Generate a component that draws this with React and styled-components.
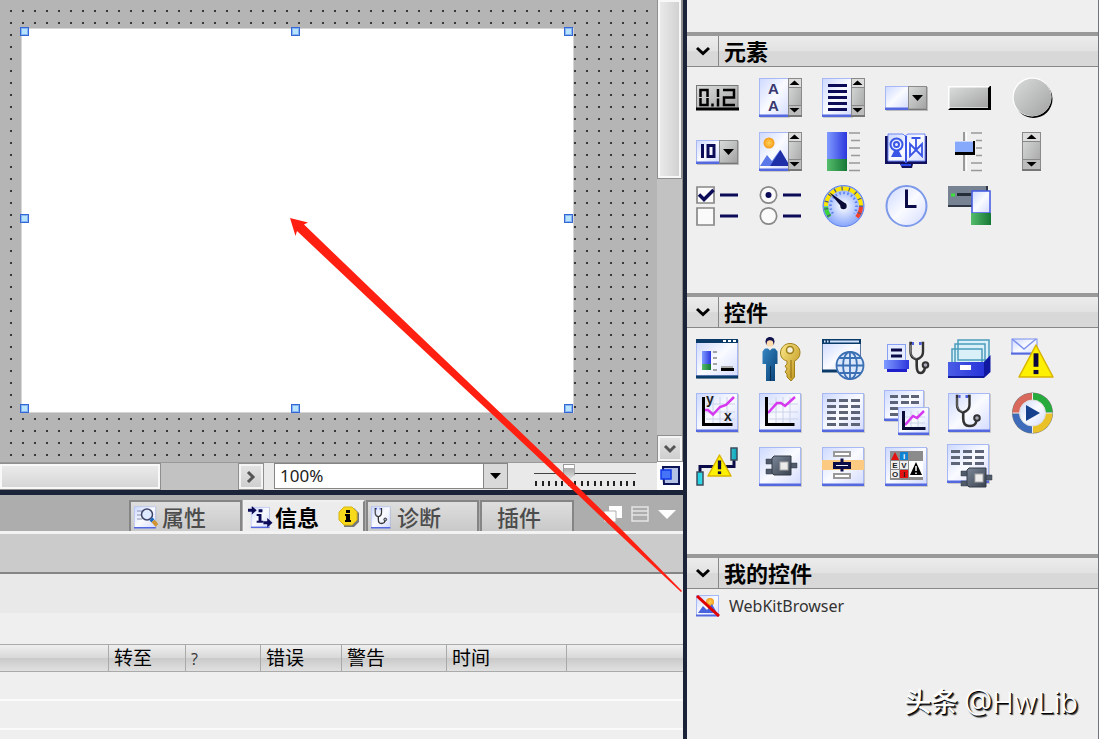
import React from 'react';
import styled, { createGlobalStyle } from 'styled-components';

const GlobalStyle = createGlobalStyle`
  * {
    box-sizing: border-box;
  }

  body {
    margin: 0;
    background: #efefef;
    font-family: "Open Sans", "Noto Sans CJK SC", sans-serif;
  }

  button, input, select {
    font-family: inherit;
    border-radius: 0;
    margin: 0;
    padding: 0;
  }
`;

const navy = '#1b2338';

const Page = styled.div`
  position: relative;
  display: flex;
  height: 100vh;
  overflow: hidden;
`;

const Workbench = styled.div`
  flex: 1;
  min-width: 0;
  display: grid;
  grid-template-rows: minmax(0, 1fr) 244px;
`;

const Editor = styled.section`
  display: grid;
  grid-template-columns: minmax(0, 1fr) 26px;
  grid-template-rows: minmax(0, 1fr) 28px;
  background: #b5b5b5;
  border-bottom: 5px solid ${navy};
`;

const Canvas = styled.div`
  position: relative;
  overflow: hidden;
  background-color: #b5b5b5;
  background-image: radial-gradient(circle, #000 0, #222 0.6px, transparent 1.3px);
  background-size: 12px 12px;
  background-position: 5px 5px;
`;

const Screen = styled.div`
  position: absolute;
  left: 21px;
  top: 28px;
  width: 553px;
  height: 385px;
  background: #fff;
  border: 1px solid #d6d6d6;
`;

const Handle = styled.span`
  position: absolute;
  left: ${props => props.$x}px;
  top: ${props => props.$y}px;
  width: 9px;
  height: 9px;
  background: #b8e4fb;
  border: 1px solid #3567d6;
  box-shadow: inset 0 0 0 1px #86b4f0;
`;

const VerticalScroll = styled.div`
  display: flex;
  flex-direction: column;
  justify-content: space-between;
  background: #c2c2c2;
  border-right: 1px solid #8d8d8d;
`;

const VerticalThumb = styled.div`
  height: 179px;
  border: 1px solid #8f8f8f;
  border-top: 0;
  box-shadow: inset 0 0 0 2px #f8f8f8;
  background: linear-gradient(90deg, #ececec, #cfcfcf);
`;

const ScrollButton = styled.button`
  display: flex;
  align-items: center;
  justify-content: center;
  width: 26px;
  height: 27px;
  border: 1px solid #8f8f8f;
  box-shadow: inset 0 0 0 2px #f4f4f4;
  background: linear-gradient(#e4e4e4, #cdcdcd);
`;

const ZoomBar = styled.div`
  display: flex;
  align-items: stretch;
  background: #e9e9e9;
  border-top: 1px solid #999;
`;

const HorizontalScroll = styled.div`
  flex: 1;
  display: flex;
  justify-content: space-between;
  background: #c2c2c2;
  margin-right: 10px;
`;

const HorizontalThumb = styled.div`
  width: 61%;
  border: 1px solid #8f8f8f;
  border-left: 0;
  box-shadow: inset 0 0 0 2px #f8f8f8;
  background: linear-gradient(#ececec, #d4d4d4);
`;

const ZoomPicker = styled.div`
  position: relative;
  width: 234px;
  margin-right: 26px;

  svg {
    position: absolute;
    right: 0;
    top: 0;
    pointer-events: none;
  }
`;

const ZoomSelect = styled.select`
  appearance: none;
  width: 100%;
  height: 26px;
  padding: 0 5px;
  border: 1px solid #858585;
  background: #fff;
  color: #222;
  font-family: "Noto Sans", sans-serif;
  font-size: 17px;
  line-height: 24px;
`;

const ZoomSlider = styled.div`
  width: 102px;
  margin-right: 21px;
  display: flex;
  flex-direction: column;

  input {
    appearance: none;
    width: 100%;
    height: 18px;
    background: linear-gradient(#444, #444) 0 10px / 100% 1px no-repeat;
  }

  input::-webkit-slider-thumb {
    appearance: none;
    width: 12px;
    height: 16px;
    background: linear-gradient(#fff 0 3px, #aaa 3px, #ddd);
    border: 1px solid #999;
    clip-path: polygon(0 0, 100% 0, 100% 68%, 50% 100%, 0 68%);
  }
`;

const Ticks = styled.div`
  display: flex;
  justify-content: space-between;
  padding: 0 1px;

  span {
    width: 2px;
    height: 5px;
    background: #222;
  }
`;

const Overview = styled.button`
  border: 0;
  background: #fff;
  display: flex;
  align-items: center;
  justify-content: center;
`;

const Inspector = styled.section`
  overflow: hidden;
  background: #efefef;
`;

const TabBar = styled.div`
  display: flex;
  justify-content: space-between;
  align-items: flex-end;
  height: 36px;
  padding-left: 129px;
  background: #adadad;
`;

const Tabs = styled.div`
  display: flex;
  gap: 1px;
`;

const Tab = styled.button`
  display: flex;
  align-items: center;
  gap: ${props => (props.$active ? 2 : 4)}px;
  width: ${props => props.$width}px;
  height: 31px;
  padding: 0 4px 0 ${props => (props.$plain ? 15 : 3)}px;
  border: 2px solid ${props => (props.$active ? '#f0f0f0' : '#858585')};
  border-bottom: 0;
  border-right-color: #858585;
  background: ${props => (props.$active ? '#ececec' : 'linear-gradient(#dedede, #c9c9c9)')};
  color: ${props => (props.$active ? '#000' : '#4c4c4c')};
  font-size: 22px;
  font-weight: ${props => (props.$active ? 700 : 500)};
  line-height: 28px;

  svg:last-child:not(:first-child) {
    margin-left: auto;
  }
`;

const WindowButtons = styled.div`
  display: flex;
  gap: 8px;
  padding: 0 6px 7px 0;

  button {
    display: flex;
    border: 0;
    background: none;
  }
`;

const Strip = styled.div`
  height: ${props => props.$height}px;
  background: ${props => props.$color};
`;

const SubTabs = styled.div`
  height: 43px;
  border-top: 3px solid #f3f3f3;
  border-bottom: 2px solid #858585;
  background: #cbcbcb;
`;

const Messages = styled.table`
  width: 100%;
  table-layout: fixed;
  border-collapse: separate;
  border-spacing: 0;
  font-size: 19px;

  th {
    height: 28px;
    padding: 0 0 0 5px;
    border-top: 1px solid #aaa;
    border-bottom: 1px solid #aaa;
    border-right: 1px solid #aaa;
    background: linear-gradient(#efefef, #d9d9d9 48%, #cacaca 52%, #e0e0e0);
    text-align: left;
    font-weight: 400;
    line-height: 24px;
    white-space: nowrap;
  }

  th:last-child {
    border-right: 0;
  }

  td {
    height: 29px;
    padding: 0;
    border-bottom: 2px solid #fbfbfb;
  }
`;

const Hint = styled.span`
  font-size: 16px;
  color: #333;
`;

const Toolbox = styled.aside`
  width: 416px;
  padding-top: 32px;
  border-left: 4px solid ${navy};
  border-right: 1px solid #6f7480;
  background: #efefef;
`;

const Group = styled.section`
  border-top: 4px solid #999;
`;

const GroupHeader = styled.h2`
  display: flex;
  height: 31px;
  margin: 0;
  border-bottom: 1px solid #888;
  background: linear-gradient(#ececec, #e2e2e2 50%, #d8d8d8 52%, #d8d8d8);
  font-size: 22px;
  font-weight: 700;
  line-height: 30px;
  color: #000;
`;

const Toggle = styled.button`
  display: flex;
  align-items: center;
  justify-content: center;
  width: 32px;
  margin-right: 5px;
  border: 0;
  border-right: 1px solid #888;
  background: none;
`;

const Palette = styled.div`
  display: grid;
  grid-template-columns: repeat(6, 42px);
  gap: 12px 21px;
  padding: 10px 9px 66px;
`;

const Tool = styled.button`
  display: block;
  width: 42px;
  height: 42px;
  border: 0;
  background: none;

  svg {
    display: block;
    overflow: visible;
  }
`;

const CustomControl = styled.button`
  display: flex;
  align-items: center;
  gap: 9px;
  margin: 4px 0 0 9px;
  border: 0;
  background: none;
  color: #333;
  font-family: "Noto Sans", sans-serif;
  font-size: 16px;
  line-height: 26px;
`;

const Pointer = styled.svg`
  position: absolute;
  left: 0;
  top: 0;
  pointer-events: none;
`;

const Watermark = styled.div`
  position: absolute;
  right: 21px;
  bottom: 18px;
  display: flex;
  align-items: center;
  gap: 6px;
  color: #fff;
  font-family: Inter, "Noto Sans CJK SC", sans-serif;
  font-size: 29px;
  font-weight: 300;
  line-height: 36px;
  text-shadow: 1px 1px 0 #000, 2px 2px 1px #333;

  b {
    font-size: 27px;
    font-weight: 500;
  }
`;

const Hidden = styled.svg`
  position: absolute;
`;

const Gradients = () => (
  <Hidden width="0" height="0" aria-hidden="true">
    <defs>
      <linearGradient id="paper" x1="0" y1="0" x2="1" y2="1">
        <stop offset="0" stopColor="#ccd8ff" />
        <stop offset="0.5" stopColor="#fafbff" />
        <stop offset="1" stopColor="#d3dbff" />
      </linearGradient>
      <linearGradient id="metal" x1="0" y1="0" x2="1" y2="1">
        <stop offset="0" stopColor="#dadcdc" />
        <stop offset="1" stopColor="#a2a2a2" />
      </linearGradient>
      <linearGradient id="blue" x1="0" y1="0" x2="1" y2="0">
        <stop offset="0" stopColor="#7f9bff" />
        <stop offset="1" stopColor="#2c37dd" />
      </linearGradient>
      <linearGradient id="green" x1="0" y1="0" x2="1" y2="0">
        <stop offset="0" stopColor="#55bd6c" />
        <stop offset="1" stopColor="#167836" />
      </linearGradient>
      <linearGradient id="slate" x1="0" y1="0" x2="1" y2="1">
        <stop offset="0" stopColor="#7c8798" />
        <stop offset="1" stopColor="#39424f" />
      </linearGradient>
      <linearGradient id="gold" x1="0" y1="0" x2="1" y2="1">
        <stop offset="0" stopColor="#fbe98a" />
        <stop offset="1" stopColor="#b98b10" />
      </linearGradient>
      <linearGradient id="suit" x1="0" y1="0" x2="1" y2="1">
        <stop offset="0" stopColor="#3487c4" />
        <stop offset="1" stopColor="#083e72" />
      </linearGradient>
      <linearGradient id="cyan" x1="0" y1="0" x2="1" y2="0">
        <stop offset="0" stopColor="#18cfe0" />
        <stop offset="0.5" stopColor="#9ff6fb" />
        <stop offset="1" stopColor="#0aa6bb" />
      </linearGradient>
      <radialGradient id="dial">
        <stop offset="0" stopColor="#ffffff" />
        <stop offset="1" stopColor="#86a5fb" />
      </radialGradient>
      <radialGradient id="sun">
        <stop offset="0" stopColor="#ffd35c" />
        <stop offset="1" stopColor="#f59a18" />
      </radialGradient>
    </defs>
  </Hidden>
);

const Icon = ({ children }) => (
  <svg width="42" height="42" viewBox="0 0 42 42" aria-hidden="true">{children}</svg>
);

const Paper = ({ x = 0, y = 1, w = 42, h = 39 }) => (
  <g>
    <rect x={x + 1} y={y + 1} width={w} height={h} fill="#bbb" opacity="0.7" />
    <rect x={x + 0.5} y={y + 0.5} width={w - 1} height={h - 1} fill="url(#paper)" stroke="#a8b8f4" />
    <rect x={x} y={y + h - 2.5} width={w} height="2.5" fill="#5468e0" />
  </g>
);

const ScrollStrip = ({ x = 29 }) => (
  <g>
    <rect x={x + 0.5} y="1.5" width={x === 29 ? 13 : 18} height="38" fill="url(#metal)" stroke="#8a8a8a" />
    <rect x={x + 1} y="2" width={x === 29 ? 12 : 17} height="8" fill="#ddd" />
    <rect x={x + 1} y="29" width={x === 29 ? 12 : 17} height="9" fill="#bcbcbc" />
    <path
      d={`M${x} 10.5h${x === 29 ? 13 : 19}M${x} 28.5h${x === 29 ? 13 : 19}`}
      stroke="#888"
    />
    <path d={`M${x} 39h${x === 29 ? 14 : 19}`} stroke="#777" strokeWidth="2" />
    <path
      transform={`translate(${x === 29 ? 35.5 : x + 9.5} 0)`}
      d="M-5 8 0 3.500 5 8ZM-5 31 0 35.500 5 31Z"
      fill="#000"
    />
  </g>
);

const Combo = ({ children }) => (
  <g>
    <rect x="1" y="10" width="42" height="24" fill="#bbb" />
    <rect x="0.5" y="9.500" width="23" height="22" fill="url(#paper)" stroke="#a8b8f4" />
    <rect x="0" y="30.500" width="24" height="2.500" fill="#5468e0" />
    <rect x="23.500" y="9.500" width="18" height="22.500" fill="url(#metal)" stroke="#8a8a8a" />
    <path d="M24 32.500h18" stroke="#777" />
    <path d="M27 18h11l-5.500 6Z" fill="#000" />
    {children}
  </g>
);

const Cells = ({ xs, ys, w = 9 }) => (
  <g fill="#5d6478">
    {ys.map(y => xs.map(x => <rect key={`${x}-${y}`} x={x} y={y} width={w} height="3" />))}
  </g>
);

const Stethoscope = ({ x = 0, y = 0, head = 20.5 }) => (
  <g transform={`translate(${x} ${y})`} fill="none">
    <path d="M2 1H0.500V10C0.500 15 3 16.500 6.500 17.500 10 16.500 13 15 13 10V1H11.500" stroke="#333" strokeWidth="2.400" />
    <path
      d={`M6.700 17.500V23.500C6.700 28 8 31 ${head / 2 + 2.5} 31 ${head - 2} 31 ${head - 1} 28.500 ${head - 0.5} 25.500`}
      stroke="#333"
      strokeWidth="2.600"
    />
    <path d="M0.500 3V10C1 14 3 15.500 6.500 16.500" stroke="#8d8d8d" strokeWidth="0.800" />
    <path d="M2 1.500h2M9 1.500h2.500" stroke="#4b5fe0" strokeWidth="3" />
    <circle cx={head} cy="23" r="2.800" fill="#aab" stroke="#333" strokeWidth="2" />
  </g>
);

const Warning = ({ x, y, w, h }) => (
  <g>
    <path
      d={`M${x + w / 2} ${y}L${x + w} ${y + h}H${x}Z`}
      fill="#fdf000"
      stroke="#d8b400"
      strokeWidth="1.500"
      strokeLinejoin="round"
    />
    <rect x={x + w / 2 - w / 14} y={y + h * 0.26} width={w / 7} height={h * 0.42} fill="#0b0640" />
    <rect x={x + w / 2 - w / 14} y={y + h * 0.78} width={w / 7} height={h * 0.13} fill="#0b0640" />
  </g>
);

const Plug = ({ x = 0, y = 0 }) => (
  <g transform={`translate(${x} ${y})`}>
    <path d="M7 13h7v5H7ZM7 23h7v5H7ZM31 17h7v5h-7Z" fill="#4f5a6a" stroke="#343c48" strokeWidth="0.500" />
    <path d="M15 10h17v19H15l-2-2V12Z" fill="url(#slate)" stroke="#343c48" />
    <rect x="21" y="16" width="8" height="8" fill="#ececec" stroke="#aaa" />
  </g>
);

const Dashes = () => <path d="M24 10h18M24 31h18" stroke="#0b0b58" strokeWidth="3" />;

const polar = (angle, radius) => {
  const a = (angle * Math.PI) / 180;
  return [21.5 + radius * Math.cos(a), 21 + radius * Math.sin(a)];
};

const arc = (from, to, radius) => {
  const [x1, y1] = polar(from, radius);
  const [x2, y2] = polar(to, radius);
  return `M${x1} ${y1}A${radius} ${radius} 0 ${to - from > 180 ? 1 : 0} 1 ${x2} ${y2}`;
};

const elements = [
  ['IO field', (
    <Icon>
      <rect x="0.5" y="8.5" width="41.5" height="24" fill="url(#metal)" stroke="#777" />
      <path d="M0 32h43" stroke="#000" strokeWidth="3" />
      {/* seven segment read-out */}
      <g fill="none" stroke="#000" strokeWidth="2.5">
        <path d="M4.500 13h7v15h-7ZM16.500 26.500v3M22 12v8M22 21.500v8M27 13h11v7.500H28V28h11" />
      </g>
      <path d="M3 20.500h3M10 20.500h3" stroke="#ccc" />
    </Icon>
  )],
  ['Symbolic IO', (
    <Icon>
      <Paper w={30} />
      <ScrollStrip />
      <g fill="#38386e" fontFamily="Liberation Sans" fontSize="15" fontWeight="700" textAnchor="middle">
        <text x="14.500" y="17">A</text>
        <text x="14.500" y="34">A</text>
      </g>
    </Icon>
  )],
  ['List', (
    <Icon>
      <Paper w={30} />
      <path d="M6 8.500h19M6 14.500h19M6 20.500h19M6 26.500h19M6 32.500h19" stroke="#0b0b58" strokeWidth="3" />
      <ScrollStrip />
    </Icon>
  )],
  ['Combo box', <Icon><Combo /></Icon>],
  ['Button', (
    <Icon>
      <path d="M0 9h43v24H0Z" fill="#000" />
      <path d="M0 9h42l-2 2v20H2l-2 2Z" fill="#fff" />
      <rect x="1.500" y="10.500" width="38.500" height="20" fill="url(#metal)" />
    </Icon>
  )],
  ['Round button', (
    <Icon>
      <circle cx="22.500" cy="22" r="19" fill="#000" />
      <circle cx="21" cy="20" r="19.500" fill="#fff" />
      <circle cx="21.500" cy="20.500" r="18.800" fill="url(#metal)" />
    </Icon>
  )],
  ['Date and time', (
    <Icon>
      <Combo>
        <path d="M6.500 13v14M12 14.500h6v11h-6Z" fill="none" stroke="#0b0b58" strokeWidth="3" />
      </Combo>
    </Icon>
  )],
  ['Graphic IO', (
    <Icon>
      <Paper w={30} />
      <circle cx="10" cy="12" r="5.500" fill="url(#sun)" />
      <path d="M1 35 8 24 13 30 21 19 29 32V35Z" fill="#5b78e8" />
      <path d="M11 35 21.500 19 29 32V35Z" fill="#1e2fa8" />
      <ScrollStrip />
    </Icon>
  )],
  ['Bar', (
    <Icon>
      <rect x="5" y="1" width="20" height="27" fill="url(#blue)" />
      <rect x="5" y="28" width="20" height="12" fill="url(#green)" />
      <path d="M27 2h11M29 9.500h9M27 17h11M29 24.500h9M27 32h11M27 39.500h11" stroke="#999" strokeWidth="1.700" />
    </Icon>
  )],
  ['Symbol library', (
    <Icon>
      <path d="M0 5h42v28H28l-1 4H17l-2-4H0Z" fill="#10105c" />
      <path d="M3 3h15l2 2 3-2h17v27H23l-2 2-2-2H3Z" fill="url(#paper)" stroke="#6f86f5" />
      <path d="M21 5v27" stroke="#3a55e6" strokeWidth="2" />
      <path d="M16 33h10v2H16Z" fill="#2c4ae8" />
      <g fill="none" stroke="#3a55e6" strokeWidth="2">
        <circle cx="11.500" cy="13.500" r="6" />
        <circle cx="11.500" cy="13.500" r="2.500" />
        <path d="M25 13v12l12-12v12ZM31 19V7M26.500 7h9" strokeWidth="1.800" />
      </g>
      <path d="M9 20h5l3 6H6Z" fill="#3a55e6" />
    </Icon>
  )],
  ['Slider', (
    <Icon>
      <path d="M16 1v39" stroke="#999" strokeWidth="2" />
      <path d="M18.500 1v39" stroke="#fff" />
      <path d="M23 2h11M28 9.500h6M28 17h6M28 24.500h6M23 32h11M23 39.500h11" stroke="#999" strokeWidth="1.700" />
      <rect x="7" y="10" width="20" height="14" fill="#000" />
      <rect x="7" y="10" width="18" height="11" fill="#86a9fb" />
      <path d="M7 10.500h18" stroke="#c8d8ff" />
    </Icon>
  )],
  ['Scroll bar', <Icon><ScrollStrip x={11} /></Icon>],
  ['Check box', (
    <Icon>
      <path d="M1 2h17v16H1ZM1 23h17v17H1Z" fill="#fafafa" stroke="#888" strokeWidth="1.700" />
      <path d="M3 9.500 8 14.500 17.500 5" fill="none" stroke="#0b0b58" strokeWidth="3.500" />
      <Dashes />
    </Icon>
  )],
  ['Option button', (
    <Icon>
      <g fill="#fafafa" stroke="#888" strokeWidth="1.700">
        <circle cx="9.500" cy="10" r="8.200" />
        <circle cx="9.500" cy="31" r="8.200" />
      </g>
      <circle cx="9.500" cy="10" r="3" fill="#0b0b58" />
      <Dashes />
    </Icon>
  )],
  ['Gauge', (
    <Icon>
      <circle cx="21.500" cy="21" r="20.500" fill="url(#dial)" stroke="#5f83ec" />
      <g fill="none" strokeWidth="4">
        <path d={arc(142, 178, 17.500)} stroke="#3bd23b" />
        <path d={arc(180, 360, 17.500)} stroke="#ffe600" />
        <path d={arc(2, 40, 17.500)} stroke="#f2402c" />
        <path d={arc(145, 395, 17.500)} stroke="#4a5780" strokeDasharray="1.200 6" />
        <path d={arc(145, 395, 13)} stroke="#5a80f0" strokeWidth="2.500" strokeDasharray="1.500 2.500" />
      </g>
      <path d="M7 7 23.500 18.500 20 22.500Z" fill="#0b0b38" />
      <circle cx="21.500" cy="21" r="3.200" fill="#0b0b38" />
    </Icon>
  )],
  ['Clock', (
    <Icon>
      <circle cx="21.500" cy="21" r="20" fill="url(#paper)" stroke="#7c99ea" strokeWidth="2" />
      <path d="M21.500 4.500v17h10" fill="none" stroke="#0b0b48" strokeWidth="3" />
    </Icon>
  )],
  ['Memory space', (
    <Icon>
      <rect x="0" y="1" width="39" height="21" fill="#778292" />
      <path d="M0 21h39M39 1v20" stroke="#2f3844" strokeWidth="2" />
      <path d="M9 9.500h14" stroke="#262e3a" strokeWidth="3" />
      <path d="M3 10h4" stroke="#3be03b" strokeWidth="3" />
      <rect x="24" y="6" width="18" height="22" fill="url(#paper)" stroke="#4057e4" strokeWidth="1.500" />
      <rect x="23" y="28" width="20" height="12" fill="url(#green)" />
    </Icon>
  )],
];

const controls = [
  ['Screen window', (
    <Icon>
      <Paper />
      <path d="M0 3h42" stroke="#0a3a68" strokeWidth="4" />
      <path d="M0 39h42" stroke="#0a3a68" strokeWidth="3" />
      <path d="M27 3h3M32 3h3M37 3h3" stroke="#fff" strokeWidth="2" />
      <rect x="6" y="13" width="9" height="13" fill="url(#blue)" />
      <rect x="6" y="26" width="9" height="6" fill="url(#green)" />
      <path d="M17 14h4M17 20h4M17 26h4M17 32h4" stroke="#888" strokeWidth="1.700" />
      <path d="M25 28h12v4H25Z" fill="#aaa" />
      <path d="M25 31.500h13" stroke="#000" strokeWidth="3" />
    </Icon>
  )],
  ['User view', (
    <Icon>
      <circle cx="11" cy="3.500" r="4.500" fill="#10104c" />
      <circle cx="11" cy="5.500" r="3.300" fill="#ffdcae" />
      <path d="M6 10.500h3l2 2 2-2h3l2.500 3V26H16v17H7V26H3.500V13.500Z" fill="url(#suit)" />
      <path d="M11.500 28v15" stroke="#072c52" />
      <path
        d="M31 5.500c6 0 10 4 10 9 0 4-2 7-5.500 8.500V39L32 43 28 39v-3l-2-2 2-3-2-3 2-2v-3C24 22 21.500 19 21.500 15c0-5 4-9.500 9.500-9.500Z"
        fill="url(#gold)"
        stroke="#9f801b"
      />
      <path d="M32 22v18" stroke="#8c6b10" />
      <circle cx="31" cy="12" r="3.500" fill="#f4f0dc" stroke="#9f801b" strokeWidth="1.500" />
    </Icon>
  )],
  ['HTML browser', (
    <Icon>
      <path d="M0.500 3h38v30H0.500Z" fill="url(#paper)" stroke="#5b78a0" />
      <path d="M0 3.500h39" stroke="#0a3a68" strokeWidth="5" />
      <path d="M2 3.500h1.500M5 3.500h1.500M8 3.500h29" stroke="#d4e4ff" strokeWidth="2" />
      <path d="M0 33h16" stroke="#0a3a68" strokeWidth="3" />
      <circle cx="28" cy="27.500" r="13.500" fill="#dbe8fb" />
      <g fill="none" stroke="#3c70b4" strokeWidth="1.800">
        <circle cx="28" cy="27.500" r="13.500" />
        <ellipse cx="28" cy="27.500" rx="7" ry="13.500" />
        <path d="M28 14v27M14.500 27.500h27M17 20h22M17 35h22" />
      </g>
    </Icon>
  )],
  ['Print diagnostics', (
    <Icon>
      <rect x="2.500" y="6.500" width="18" height="17" fill="#e6ecff" stroke="#8aa0f4" />
      <path d="M6 12h11M6 18h11" stroke="#0b0b48" strokeWidth="3" />
      <path d="M-1 22h25v9H-1Z" fill="url(#blue)" />
      <path d="M2 32.500h20" stroke="#1f1fcc" strokeWidth="3" />
      <Stethoscope x={25} y={4} head={15.5} />
    </Icon>
  )],
  ['Recipe view', (
    <Icon>
      <path d="M10 2h31v20H10ZM7 6h30v20H7ZM4 11h30v18H4Z" fill="#d9f0f8" stroke="#4c9cbc" strokeWidth="1.500" />
      <path d="M36 24 42.500 17V34L36 40Z" fill="#1018a0" />
      <path d="M0 24h36v15H0Z" fill="url(#blue)" />
      <path d="M0 24h36v15H0Z" fill="#2733d6" opacity="0.600" />
      <path d="M0 39h36" stroke="#10189a" strokeWidth="2" />
      <path d="M12 27h11v5H12Z" fill="#fff" />
    </Icon>
  )],
  ['Alarm view', (
    <Icon>
      <rect x="1" y="1" width="25" height="15" fill="url(#paper)" stroke="#7d92ee" />
      <path d="M1 1 13 11 25 1" fill="none" stroke="#7d92ee" strokeWidth="1.500" />
      <path d="M0 15.500h25" stroke="#5468e0" strokeWidth="2" />
      <Warning x={8} y={7} w={34} h={32} />
    </Icon>
  )],
  ['Function view', (
    <Icon>
      <Paper />
      <path d="M10 12h29M10 20h29M10 27h29M17 5v27M24 5v27M31 5v27" stroke="#ccd2e8" />
      <path d="M9 18h3L17 22.500 24 15 30 13 38 5" fill="none" stroke="#d638f0" strokeWidth="2.500" />
      <path d="M7.500 5v27.500h29" fill="none" stroke="#000" strokeWidth="3" />
      <g fill="#222" fontFamily="Liberation Sans" fontSize="14" fontWeight="700">
        <text x="10" y="12">y</text>
        <text x="28" y="29">x</text>
      </g>
    </Icon>
  )],
  ['Trend view', (
    <Icon>
      <Paper />
      <path d="M10 12h29M10 20h29M10 27h29M17 5v27M24 5v27M31 5v27" stroke="#ccd2e8" />
      <path d="M9 21 18 11H22L26 14 36 5" fill="none" stroke="#d638f0" strokeWidth="2.500" />
      <path d="M7.500 5v27.500h28" fill="none" stroke="#000" strokeWidth="3" />
    </Icon>
  )],
  ['Table view', (
    <Icon>
      <Paper />
      <Cells xs={[5, 17, 29]} ys={[7, 13, 19, 25, 31]} />
    </Icon>
  )],
  ['Trend table', (
    <Icon>
      <Paper x={-1} y={-2} w={40} h={31} />
      <Cells xs={[5, 16, 26]} ys={[3, 9, 15, 21]} w={8} />
      <Paper x={13} y={15} w={31} h={28} />
      <path d="M20 25h20M20 31h20M26 19v18M33 19v18" stroke="#ccd2e8" />
      <path d="M20 33 28 24 32 26 39 19" fill="none" stroke="#d638f0" strokeWidth="2.500" />
      <path d="M18.500 19v17.500h22" fill="none" stroke="#0b0b38" strokeWidth="3" />
    </Icon>
  )],
  ['System diagnostics', (
    <Icon>
      <Paper />
      <Stethoscope x={8.5} y={3} />
    </Icon>
  )],
  ['Media player', (
    <Icon>
      <circle cx="21.500" cy="21" r="20.500" fill="#777" />
      <g fill="none" strokeWidth="8">
        <path d={arc(180, 268, 16)} stroke="#d8695c" />
        <path d={arc(270, 358, 16)} stroke="#27ab3c" />
        <path d={arc(0, 88, 16)} stroke="#e9c22a" />
        <path d={arc(90, 178, 16)} stroke="#3f6cba" />
      </g>
      <path d="M21.500 1v40M1.500 21h40" stroke="#eee" />
      <circle cx="21.500" cy="21" r="13" fill="url(#paper)" stroke="#ddd" />
      <path d="M15 13 29 21 15 29Z" fill="#16408e" />
    </Icon>
  )],
  ['Connection status', (
    <Icon>
      <path d="M4 27V20.500H38V14" fill="none" stroke="#0b0b48" strokeWidth="3" />
      <path d="M1 26h6v13H1ZM35 2h6v12h-6Z" fill="url(#cyan)" stroke="#3c4c5c" strokeWidth="1.500" />
      <Warning x={12} y={9} w={23} h={21} />
    </Icon>
  )],
  ['PLC block', (
    <Icon>
      <Paper />
      <Plug />
    </Icon>
  )],
  ['Network view', (
    <Icon>
      <Paper />
      <path d="M0 14h42v10H0Z" fill="#fcca80" />
      <path d="M12 6h16v4H12ZM12 28h16v4H12Z" fill="#fff" stroke="#999" strokeWidth="2" />
      <path d="M20 12.500v13" stroke="#0b0b48" strokeWidth="3" />
      <path d="M12.500 17.500h15v4h-15Z" fill="#eee" stroke="#0b0b48" strokeWidth="3" />
    </Icon>
  )],
  ['Matrix display', (
    <Icon>
      <Paper />
      <rect x="5" y="5" width="33" height="29" fill="#8b8b8b" />
      <path d="M6 14 10 6 14 14Z" fill="#e41010" />
      <path d="M15 6h8v8h-8Z" fill="#1182d2" />
      <path d="M6 15h8v8H6ZM15 15h8v8h-8ZM6 24h8v8H6Z" fill="#eee" />
      <path d="M15 24h8v8h-8Z" fill="#e41010" />
      <rect x="24" y="15" width="14" height="16" fill="#fff" />
      <path d="M31 16 37 29H25Z" fill="#000" />
      <path d="M31 20v5M31 26.500v1.500" stroke="#fff" strokeWidth="1.500" />
      <g fill="#222" fontFamily="Liberation Sans" fontSize="8" fontWeight="700" textAnchor="middle">
        <text x="10" y="22">E</text>
        <text x="19" y="22">V</text>
        <text x="10" y="31">O</text>
        <text x="19" y="31">I</text>
        <text x="19" y="13" fill="#fff">i</text>
      </g>
    </Icon>
  )],
  ['PLC code view', (
    <Icon>
      <Paper x={-1} y={-2} w={42} h={39} />
      <Cells xs={[3, 15, 27]} ys={[4, 10, 16]} />
      <Plug x={6} y={12} />
    </Icon>
  )],
];

const Chevron = () => (
  <svg width="16" height="12" viewBox="0 0 16 12" aria-hidden="true">
    <path d="M2 3 8 8.500 14 3" fill="none" stroke="#000" strokeWidth="3" />
  </svg>
);

const PropertiesIcon = () => (
  <svg width="24" height="24" viewBox="0 0 24 24" aria-hidden="true">
    <g transform="translate(0 1) scale(.52 .56)"><Paper /></g>
    <path d="M3 6h5M3 10h4M3 14h5" stroke="#8890b0" />
    <circle cx="13" cy="9.500" r="5.500" fill="#dfe9ff" stroke="#3c4468" strokeWidth="1.500" />
    <path d="M17 14 19 16" stroke="#1769c4" strokeWidth="4" />
    <path d="M19 16 23 20.500" stroke="#d09532" strokeWidth="4" />
  </svg>
);

const InfoIcon = () => (
  <svg width="25" height="24" viewBox="0 0 26 24" aria-hidden="true">
    <g transform="translate(3 1) scale(.46 .56)"><Paper /></g>
    <path d="M0 5h5M16 18h5" stroke="#0b0b58" strokeWidth="3" />
    <path d="M4 0.500 9 5 4 9.500ZM20 13 25.500 18 20 23ZM11 4h4v3h-4ZM9 9h5v7h2v2H9v-2h2v-5H9Z" fill="#0b0b58" />
  </svg>
);

const BadgeIcon = () => (
  <svg width="21" height="21" viewBox="0 0 21 21" aria-hidden="true">
    <path d="M6 2h10l5 5v9l-5 5H6" fill="#777" />
    <path d="M6 1h8l5 5v8l-5 5H6l-5-5V6Z" fill="#f7da1b" stroke="#d7b410" />
    <path d="M8 4h4v3H8ZM7 8h5v6h1v2H7v-2h1v-4H7Z" fill="#000" />
  </svg>
);

const DiagnosticsIcon = () => (
  <svg width="22" height="24" viewBox="0 0 22 24" aria-hidden="true">
    <g transform="translate(0 1) scale(.46 .56)"><Paper /></g>
    <g transform="translate(4 3) scale(.5)"><Stethoscope /></g>
  </svg>
);

const ToolGroup = ({ title, tools, children }) => (
  <Group>
    <GroupHeader>
      <Toggle aria-label={title}><Chevron /></Toggle>
      {title}
    </GroupHeader>
    {tools && (
      <Palette>
        {tools.map(([name, icon]) => <Tool key={name} aria-label={name}>{icon}</Tool>)}
      </Palette>
    )}
    {children}
  </Group>
);

const handles = [[20, 27], [291, 27], [564, 27], [20, 214], [564, 214], [20, 404], [291, 404], [564, 404]];

const App = () => (
  <Page>
    <GlobalStyle />
    <Gradients />
    <Workbench>
      <Editor>
        <Canvas>
          <Screen />
          {handles.map(([x, y]) => <Handle key={`${x}-${y}`} $x={x} $y={y} />)}
        </Canvas>
        <VerticalScroll>
          <VerticalThumb />
          <ScrollButton aria-label="Scroll down">
            <svg width="14" height="12" viewBox="0 0 14 12">
              <path d="M2 3 7 8 12 3" fill="none" stroke="#555" strokeWidth="3" />
            </svg>
          </ScrollButton>
        </VerticalScroll>
        <ZoomBar>
          <HorizontalScroll>
            <HorizontalThumb />
            <ScrollButton aria-label="Scroll right">
              <svg width="12" height="14" viewBox="0 0 12 14">
                <path d="M3 2 8 7 3 12" fill="none" stroke="#555" strokeWidth="3" />
              </svg>
            </ScrollButton>
          </HorizontalScroll>
          <ZoomPicker>
            <ZoomSelect aria-label="Zoom" defaultValue="100%">
              <option>100%</option>
            </ZoomSelect>
            <svg width="25" height="26" viewBox="0 0 25 26">
              <rect x="0.500" y="0.500" width="24" height="25" fill="#d9d9d9" stroke="#858585" />
              <path d="M7 10h11l-5.500 6Z" fill="#000" />
            </svg>
          </ZoomPicker>
          <ZoomSlider>
            <input type="range" aria-label="Zoom level" min="0" max="100" defaultValue="32" />
            <Ticks>
              {Array.from({ length: 16 }, (_, i) => <span key={i} />)}
            </Ticks>
          </ZoomSlider>
        </ZoomBar>
        <Overview aria-label="Overview">
          <svg width="20" height="20" viewBox="0 0 20 20">
            <path d="M3 1h16v17H4Z" fill="#b4c0e4" stroke="#0b1458" strokeWidth="2" />
            <rect x="1" y="4" width="10" height="9" fill="#4674f8" stroke="#1038e8" strokeWidth="1.500" />
          </svg>
        </Overview>
      </Editor>
      <Inspector>
        <TabBar>
          <Tabs role="tablist">
            <Tab role="tab" $width={113}><PropertiesIcon />属性</Tab>
            <Tab role="tab" $width={122} $active aria-selected="true"><InfoIcon />信息<BadgeIcon /></Tab>
            <Tab role="tab" $width={113}><DiagnosticsIcon />诊断</Tab>
            <Tab role="tab" $width={94} $plain>插件</Tab>
          </Tabs>
          <WindowButtons>
            <button aria-label="Float">
              <svg width="20" height="20" viewBox="0 0 20 20">
                <path d="M6 2h13v12H6Z" fill="#fff" />
                <path d="M1 7h12v11H1Z" fill="#fff" stroke="#adadad" />
              </svg>
            </button>
            <button aria-label="Dock">
              <svg width="18" height="20" viewBox="0 0 18 20">
                <path d="M1 3h16v14H1Z" fill="#adadad" stroke="#e4e4e4" strokeWidth="1.500" />
                <path d="M1 7h16M1 11h16" stroke="#e4e4e4" strokeWidth="1.500" />
              </svg>
            </button>
            <button aria-label="Collapse">
              <svg width="20" height="20" viewBox="0 0 20 20">
                <path d="M1 6h18l-9 9Z" fill="#fff" />
              </svg>
            </button>
          </WindowButtons>
        </TabBar>
        <SubTabs />
        <Strip $height={39} $color="#e9e9e9" />
        <Strip $height={31} $color="#efefef" />
        <Messages>
          <colgroup>
            <col width="109" />
            <col width="77" />
            <col width="75" />
            <col width="81" />
            <col width="105" />
            <col width="120" />
            <col />
          </colgroup>
          <thead>
            <tr>
              <th />
              <th>转至</th>
              <th><Hint>?</Hint></th>
              <th>错误</th>
              <th>警告</th>
              <th>时间</th>
              <th />
            </tr>
          </thead>
          <tbody>
            <tr><td colSpan="7" /></tr>
            <tr><td colSpan="7" /></tr>
            <tr><td colSpan="7" /></tr>
          </tbody>
        </Messages>
      </Inspector>
    </Workbench>
    <Toolbox>
      <ToolGroup title="元素" tools={elements} />
      <ToolGroup title="控件" tools={controls} />
      <ToolGroup title="我的控件">
        <CustomControl>
          <svg width="24" height="22" viewBox="0 0 24 22" aria-hidden="true">
            <rect x="0.500" y="0.500" width="22" height="20" fill="url(#paper)" stroke="#a8b8f4" />
            <circle cx="14" cy="7" r="4" fill="url(#sun)" />
            <path d="M2 18 7 11 11 15 16 9 21 18Z" fill="#4a63dc" />
            <path d="M0 20.500h23" stroke="#5468e0" strokeWidth="2" />
            <path d="M1 1 23 21" stroke="#e00000" strokeWidth="3" />
          </svg>
          WebKitBrowser
        </CustomControl>
      </ToolGroup>
    </Toolbox>
    <Pointer width="1099" height="739" viewBox="0 0 1099 739" aria-hidden="true">
      <path
        d="M290 218 308 222.500 304 224.500 398 315 518.500 430 581 490 622 530 682 591 681 592 617 532 574 491 509 430 386 315 297 231 295.500 236Z"
        fill="#ff2012"
      />
    </Pointer>
    <Watermark><b>头条</b><span>@HwLib</span></Watermark>
  </Page>
);

export default App;
